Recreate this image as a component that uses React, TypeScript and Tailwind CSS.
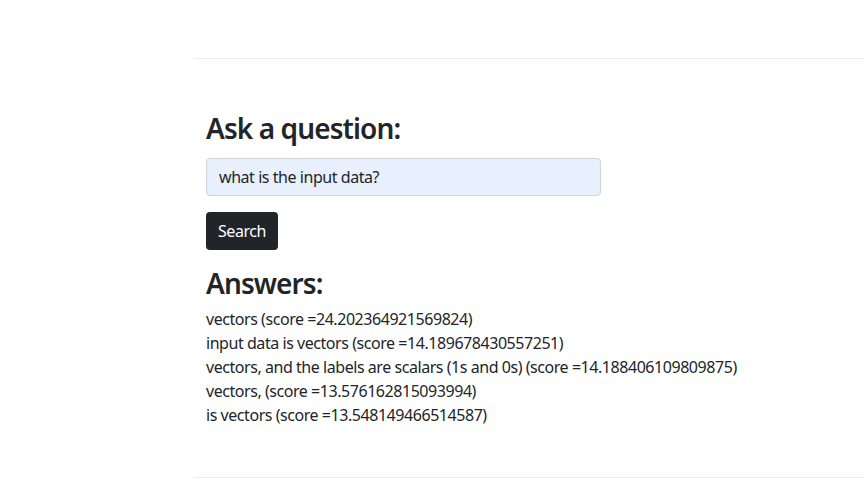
const answers = [
  "vectors (score =24.202364921569824)",
  "input data is vectors (score =14.189678430557251)",
  "vectors, and the labels are scalars (1s and 0s) (score =14.188406109809875)",
  "vectors, (score =13.576162815093994)",
  "is vectors (score =13.548149466514587)",
];

export default function App() {
  return (
    <div
      className="h-[493px] w-[864px] overflow-hidden bg-white pt-[58px] text-[#212529] tracking-[-0.45px]"
      style={{ fontFamily: '"Noto Sans", "Open Sans", sans-serif' }}
    >
      <div className="ml-[194px] border-t border-[#ebebeb] pb-[50px]">
        <div className="px-[12px] pt-[53px]">
          <h3 className="text-[28px] font-semibold leading-[1.2] tracking-[-0.9px]">Ask a question:</h3>
          <input
            className="mt-[12px] block h-[38px] w-[395px] rounded-[4px] border border-[#ced4da] bg-[#e8f0fe] px-[12px] text-[16px] outline-none"
            defaultValue="what is the input data?"
          />
          <button className="mt-[16px] h-[38px] rounded-[4px] bg-[#212529] px-[12px] text-[16px] text-white">
            Search
          </button>
          <h3 className="mt-[17px] text-[28px] font-semibold leading-[1.2] tracking-[-0.9px]">Answers:</h3>
          <div className="mt-[7px] text-[16px] leading-[24px]">
            {answers.map((a) => (
              <div key={a}>{a}</div>
            ))}
          </div>
        </div>
      </div>
      <div className="ml-[194px] border-t border-[#ebebeb]" />
    </div>
  );
}
